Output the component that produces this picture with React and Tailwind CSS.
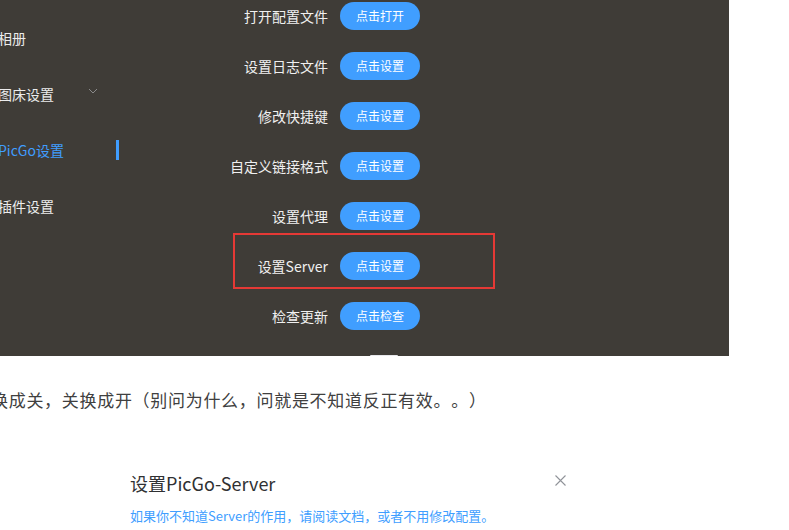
import React from "react";

const rows = [
  ["打开配置文件", "点击打开"],
  ["设置日志文件", "点击设置"],
  ["修改快捷键", "点击设置"],
  ["自定义链接格式", "点击设置"],
  ["设置代理", "点击设置"],
  ["设置Server", "点击设置"],
  ["检查更新", "点击检查"],
];

const menu = [
  { t: "相册" },
  { t: "图床设置", chevron: true },
  { t: "PicGo设置", active: true },
  { t: "插件设置" },
];

export default function App() {
  return (
    <div
      className="w-[789px] h-[530px] bg-white overflow-hidden"
      style={{ fontFamily: '"Microsoft YaHei", "Noto Sans CJK SC", sans-serif' }}
    >
      <div className="relative w-[729px] h-[356px] bg-[#3f3c37] flex">
        <div className="w-[120px] pt-[10px] flex flex-col">
          {menu.map((m) => (
            <div key={m.t} className="h-[56px] flex items-center">
              <span
                className={`ml-[-2px] text-[14px] ${m.active ? "text-[#409eff]" : "text-[#ececec]"}`}
              >
                {m.t}
              </span>
              <div className="flex-1" />
              {m.chevron && (
                <svg width="10" height="6" viewBox="0 0 10 6" className="mr-[22px] mb-[6px]">
                  <path d="M1 1 L5 5 L9 1" fill="none" stroke="#8a8a8a" strokeWidth="1" />
                </svg>
              )}
              {m.active && <div className="w-[3px] h-[20px] bg-[#409eff] mr-[1px]" />}
            </div>
          ))}
        </div>
        <div className="pt-[2px] flex flex-col gap-[22px]">
          {rows.map(([l, b]) => (
            <div key={l} className="flex items-center h-[28px]">
              <div className="w-[208px] text-right text-[14px] text-[#f0f0f0]">{l}</div>
              <div className="ml-[12px] w-[80px] h-[28px] rounded-full bg-[#409eff] text-white text-[12px] flex items-center justify-center">
                {b}
              </div>
            </div>
          ))}
        </div>
        <div className="absolute left-[233px] top-[233px] w-[262px] h-[56px] border-2 border-[#e53935]" />
        <div className="absolute left-[370px] top-[355px] w-[28px] h-[1px] rounded-t bg-[#e8e8ec]" />
      </div>
      <div className="mt-[31px] ml-[-9px] text-[17px] leading-[26px] tracking-[0.7px] text-[#404040] whitespace-nowrap [text-spacing-trim:space-all]">
        换成关，关换成开（别问为什么，问就是不知道反正有效。。）
      </div>
      <div className="mt-[58px] ml-[130px] w-[436px] flex items-start justify-between">
        <div className="text-[18px] leading-[24px] text-[#303133]">设置PicGo-Server</div>
        <svg width="11" height="11" viewBox="0 0 11 11" className="mt-[4px]">
          <path d="M0.5 0.5 L10.5 10.5 M10.5 0.5 L0.5 10.5" stroke="#909399" strokeWidth="1.1" />
        </svg>
      </div>
      <div className="mt-[12px] ml-[130px] text-[13px] leading-[18px] text-[#409eff] whitespace-nowrap">
        如果你不知道Server的作用，请阅读文档，或者不用修改配置。
      </div>
    </div>
  );
}
